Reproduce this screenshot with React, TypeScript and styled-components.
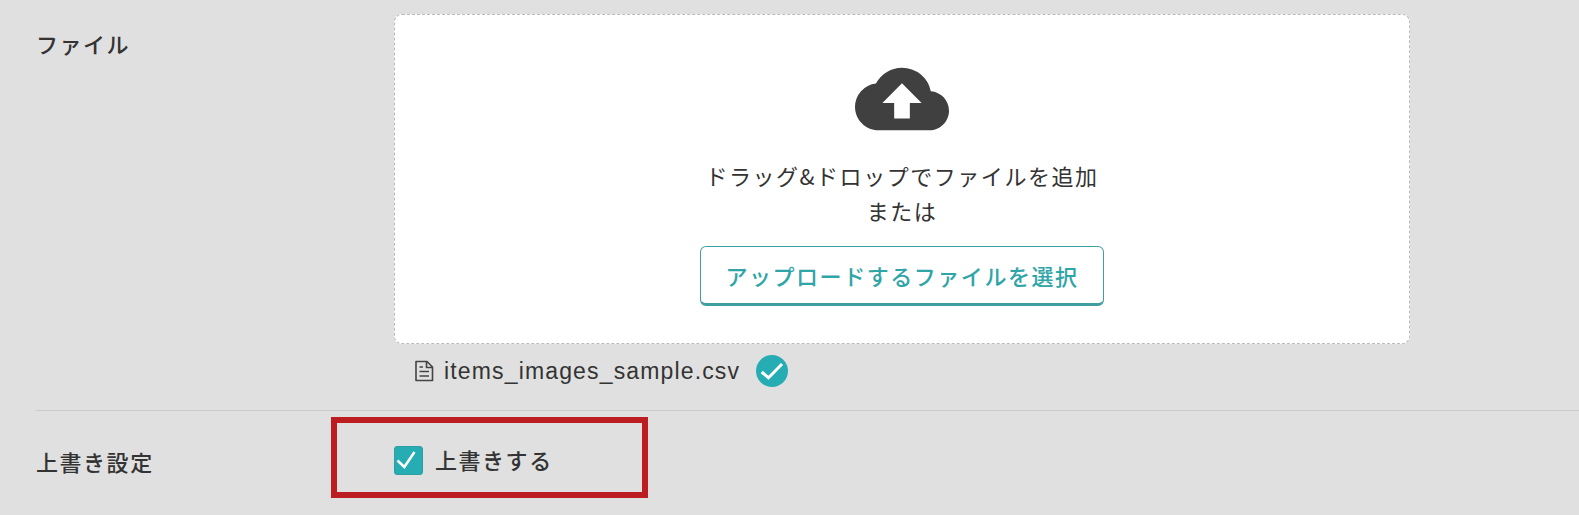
import React from "react";
import styled, { createGlobalStyle } from "styled-components";

const GlobalStyle = createGlobalStyle`
  *, *::before, *::after { box-sizing: border-box; }
  body {
    margin: 0;
    background: #e0e0e0;
    color: #333;
    font-family: "Noto Sans CJK JP", sans-serif;
    font-size: 22px;
    line-height: 35px;
    letter-spacing: 0.07em;
  }
`;

const Form = styled.form`
  padding: 14px 0 0 36px;
`;

const FormRow = styled.section`
  display: grid;
  grid-template-columns: 358px minmax(0, 1fr);
  & + & {
    border-top: 1px solid #cbcbcb;
  }
`;

const RowTitle = styled.h2<{ $top: number }>`
  margin: 0;
  padding-top: ${(p) => p.$top}px;
  font-size: 22px;
  line-height: 35px;
  font-weight: 500;
`;

const RowBody = styled.div`
  min-width: 0;
`;

const DropZone = styled.div`
  display: flex;
  flex-direction: column;
  align-items: center;
  max-width: 1016px;
  padding: 37px 16px;
  background: #fff;
  border: 1px dashed #bbb;
  border-radius: 8px;
  text-align: center;
`;

const CloudIcon = styled.svg`
  width: 94px;
  height: 94px;
  fill: #404040;
`;

const Guide = styled.p`
  margin: 0;
  padding: 12px 0 18px;
`;

const SelectButton = styled.button`
  height: 60px;
  padding: 0 24px;
  background: #fff;
  color: #2fa5a8;
  border: 1px solid #3f9fa0;
  border-bottom: 3px solid #3f9fa0;
  border-radius: 6px;
  font: inherit;
  font-weight: 500;
  letter-spacing: inherit;
  cursor: pointer;
`;

const FileLine = styled.div`
  display: flex;
  align-items: center;
  height: 66px;
  padding: 0 0 12px 20px;
`;

const FileName = styled.span`
  font-family: "Liberation Sans", sans-serif;
  font-size: 23px;
  letter-spacing: 0.05em;
`;

const FileIcon = styled.svg`
  width: 20px;
  height: 22px;
  margin-right: 10px;
`;

const DoneIcon = styled.svg`
  width: 32px;
  height: 32px;
  margin-left: 16px;
`;

const OptionBody = styled(RowBody)`
  position: relative;
  padding: 31px 0 36px;
`;

const Highlight = styled.div`
  position: absolute;
  top: 6px;
  left: -63px;
  width: 317px;
  height: 81px;
  border: 6px solid #bb1d21;
  pointer-events: none;
`;

const Option = styled.label`
  display: inline-flex;
  align-items: flex-start;
  gap: 12px;
  font-weight: 500;
  cursor: pointer;
`;

const Tick = styled.span`
  display: grid;
  width: 29px;
  height: 29px;
  margin-top: 4px;
  & > * {
    grid-area: 1 / 1;
  }
  svg {
    width: 29px;
    height: 29px;
    pointer-events: none;
    visibility: hidden;
  }
  input:checked + svg {
    visibility: visible;
  }
`;

const Checkbox = styled.input`
  appearance: none;
  width: 29px;
  height: 29px;
  margin: 0;
  border: 1px solid #2d9fa3;
  border-radius: 3px;
  background: #fff;
  &:checked {
    background: #25adb3;
  }
`;

export default function App() {
  return (
    <>
      <GlobalStyle />
      <Form>
        <FormRow>
          <RowTitle $top={12}>ファイル</RowTitle>
          <RowBody>
            <DropZone>
              <CloudIcon viewBox="0 0 24 24" aria-hidden="true">
                <path d="M19.35 10.04A7.49 7.49 0 0 0 12 4C9.11 4 6.6 5.64 5.35 8.04A5.994 5.994 0 0 0 0 14c0 3.31 2.69 6 6 6h13c2.76 0 5-2.24 5-5 0-2.64-2.05-4.78-4.65-4.96zM14 13v4h-4v-4H7l5-5 5 5h-3z" />
              </CloudIcon>
              <Guide>
                ドラッグ&amp;ドロップでファイルを追加
                <br />
                または
              </Guide>
              <SelectButton type="button">アップロードするファイルを選択</SelectButton>
            </DropZone>
            <FileLine>
              <FileIcon viewBox="0 0 20 22" fill="none" stroke="#444" strokeWidth="1.6" strokeLinejoin="round" aria-hidden="true">
                <path d="M2 1.5h11L18.500 7v13.500H2zM12.500 1.500V7.500h6M5.500 7H9M5.500 11.500h9.500M5.500 16h9.500" />
              </FileIcon>
              <FileName>items_images_sample.csv</FileName>
              <DoneIcon viewBox="0 0 32 32" role="img" aria-label="完了">
                <circle cx="16" cy="16" r="16" fill="#25adb3" />
                <path d="M5.700 17l6.800 5.800L26 9" fill="none" stroke="#fff" strokeWidth="3" />
              </DoneIcon>
            </FileLine>
          </RowBody>
        </FormRow>
        <FormRow>
          <RowTitle $top={33}>上書き設定</RowTitle>
          <OptionBody>
            <Highlight />
            <Option htmlFor="overwrite">
              <Tick>
                <Checkbox id="overwrite" type="checkbox" defaultChecked />
                <svg viewBox="0 0 29 29" fill="none" stroke="#fff" strokeWidth="2.5" aria-hidden="true">
                  <path d="M3.500 14.500l6.800 6.500L20.500 6" />
                </svg>
              </Tick>
              上書きする
            </Option>
          </OptionBody>
        </FormRow>
      </Form>
    </>
  );
}
